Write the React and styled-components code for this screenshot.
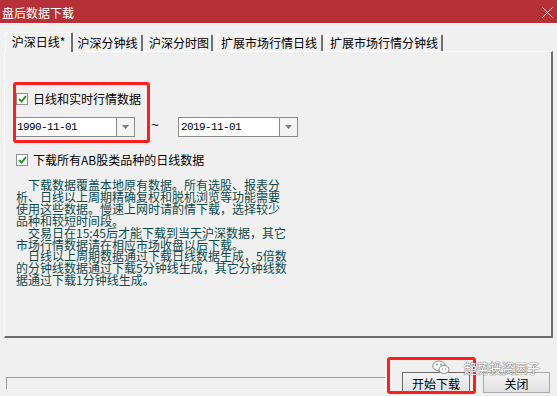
import React from 'react';
import styled, { createGlobalStyle } from 'styled-components';

const Global = createGlobalStyle`
  html, body { margin: 0; padding: 0; background: #f0f0f0; }
  body {
    width: 557px; height: 396px; overflow: hidden;
    font-family: "Noto Sans CJK SC", "Noto Sans", sans-serif;
  }
`;

const Window = styled.div`
  position: relative;
  width: 557px;
  height: 396px;
  display: flex;
  flex-direction: column;
  background: #f0f0f0;
  overflow: hidden;
`;

const TitleBar = styled.div`
  flex: 0 0 23px;
  box-sizing: border-box;
  background: #b53137;
  color: #fff;
  display: flex;
  align-items: center;
  justify-content: space-between;
  padding: 2px 4px 0 2px;
  font-size: 12px;
`;

const TitleText = styled.span`
  line-height: 12px;
`;

const Content = styled.div`
  padding: 9px 4px 0 4px;
  display: flex;
  flex-direction: column;
`;

const TabStrip = styled.div`
  display: flex;
  align-items: flex-end;
  gap: 3px;
  height: 19px;
  padding-left: 1px;
  position: relative;
  z-index: 1;
`;

const Tab = styled.div`
  box-sizing: border-box;
  width: ${p => p.$w}px;
  height: ${p => (p.$active ? 20 : 17)}px;
  margin-right: ${p => (p.$active ? -3 : 0)}px;
  margin-bottom: ${p => (p.$active ? -1 : 0)}px;
  background: #f0f0f0;
  border-top: 1px solid #fff;
  border-left: 1px solid #fff;
  border-right: 2px solid #707070;
  border-radius: 2px 2px 0 0;
  font-size: 12px;
  line-height: 12px;
  color: #000;
  display: flex;
  align-items: center;
  justify-content: center;
  padding-bottom: ${p => (p.$active ? 2 : 0)}px;
  white-space: nowrap;
`;

const Panel = styled.div`
  box-sizing: border-box;
  width: 549px;
  height: 287px;
  border-top: 1px solid #fff;
  border-left: 1px solid #fff;
  border-right: 2px solid #6d6d6d;
  border-bottom: 2px solid #6d6d6d;
  padding: 39px 0 0 9px;
  display: flex;
  flex-direction: column;
`;

const Row = styled.div`
  display: flex;
  align-items: center;
  height: ${p => p.$h || 16}px;
  margin-top: ${p => p.$mt || 0}px;
`;

const Box = styled.span`
  box-sizing: border-box;
  width: 12px;
  height: 12px;
  margin-left: 2px;
  border: 1px solid #8e8e8e;
  background: #fff;
  display: flex;
  align-items: center;
  justify-content: center;
`;

const Label = styled.span`
  margin-left: 5px;
  font-size: 12px;
  line-height: 12px;
  color: #000;
`;

const Combo = styled.div`
  box-sizing: border-box;
  width: ${p => p.$w}px;
  height: 20px;
  border: 1px solid #8c8c8c;
  background: #fff;
  display: flex;
  align-items: stretch;
`;

const ComboText = styled.span`
  flex: 1;
  padding-left: 2px;
  display: flex;
  align-items: center;
  font-family: "Liberation Mono", "DejaVu Sans Mono", monospace;
  font-size: 11px;
  letter-spacing: -0.6px;
  color: #000;
`;

const ComboButton = styled.span`
  width: 17px;
  border-left: 1px solid #8c8c8c;
  background: #f4f4f4;
  display: flex;
  align-items: center;
  justify-content: center;
`;

const Tilde = styled.span`
  width: 12px;
  margin: 0 17px 0 14px;
  font-family: "Liberation Sans", sans-serif;
  font-size: 13px;
  line-height: 12px;
  color: #000;
  text-align: center;
  position: relative;
  top: -2px;
`;

const Notes = styled.div`
  margin-top: 11px;
  padding-left: 2px;
  font-size: 12px;
  line-height: 11.9px;
  color: #0f4a4a;
  white-space: pre;
`;

const Footer = styled.div`
  flex: 1;
  display: flex;
  align-items: flex-end;
  padding: 0 7px 3px 6px;
`;

const Progress = styled.div`
  box-sizing: border-box;
  width: 380px;
  height: 13px;
  margin-bottom: 3px;
  border-top: 1px solid #a0a0a0;
  border-left: 1px solid #a0a0a0;
  border-bottom: 1px solid #fff;
  border-right: 1px solid #fff;
`;

const Button = styled.button`
  box-sizing: border-box;
  width: ${p => p.$w}px;
  height: 21px;
  margin: 0 0 0 ${p => p.$ml}px;
  padding: 2px 0 0;
  border: 1px solid ${p => (p.$default ? '#6b6b6b' : '#a9a9a9')};
  background: linear-gradient(#f3f3f3, #e2e2e2);
  font-family: "Noto Sans CJK SC", sans-serif;
  font-size: 12px;
  line-height: 12px;
  color: #000;
`;

const RedBox = styled.div`
  position: absolute;
  box-sizing: border-box;
  left: ${p => p.$x}px;
  top: ${p => p.$y}px;
  width: ${p => p.$w}px;
  height: ${p => p.$h}px;
  border: 3px solid #ff1e1e;
  border-radius: 3px;
  pointer-events: none;
`;

const Watermark = styled.div`
  position: absolute;
  left: 432px;
  top: 360px;
  display: flex;
  align-items: center;
  gap: 14px;
  pointer-events: none;
`;

const WatermarkText = styled.span`
  font-size: 13px;
  line-height: 14px;
  letter-spacing: -0.4px;
  color: #fff;
  text-shadow: 0 0 1px #666, 0 0 1px #666, 0 0 1px #777;
`;

const Check = () => (
  <svg width="9" height="8" viewBox="0 0 9 8">
    <path d="M1 4 L3.5 6.5 L8 1.2" fill="none" stroke="#1f9e1f" strokeWidth="2" />
  </svg>
);

const Arrow = () => (
  <svg width="7" height="4" viewBox="0 0 7 4">
    <path d="M0 0 H7 L3.5 4 Z" fill="#7d7d7d" />
  </svg>
);

const CloseIcon = () => (
  <svg width="11" height="11" viewBox="0 0 11 11">
    <path d="M0.5 0.5 L10.5 10.5 M10.5 0.5 L0.5 10.5" stroke="#fff" strokeWidth="1" />
  </svg>
);

const WeChat = () => (
  <svg width="18" height="15" viewBox="0 0 18 15">
    <ellipse cx="7" cy="6" rx="6.2" ry="5" fill="#fff" stroke="#888" strokeWidth="1" />
    <ellipse cx="12" cy="9.5" rx="5" ry="4" fill="#fff" stroke="#888" strokeWidth="1" />
    <circle cx="5" cy="4.5" r="0.9" fill="#888" />
    <circle cx="9" cy="4.5" r="0.9" fill="#888" />
    <circle cx="10.5" cy="9" r="0.7" fill="#888" />
    <circle cx="13.5" cy="9" r="0.7" fill="#888" />
  </svg>
);

const tabs = [
  { label: '沪深日线*', w: 68, active: true },
  { label: '沪深分钟线', w: 70 },
  { label: '沪深分时图', w: 67 },
  { label: '扩展市场行情日线', w: 107 },
  { label: '扩展市场行情分钟线', w: 117 },
];

const notes = [
  '　下载数据覆盖本地原有数据。所有选股、报表分',
  '析、日线以上周期精确复权和脱机浏览等功能需要',
  '使用这些数据。慢速上网时请酌情下载，选择较少',
  '品种和较短时间段。',
  '　交易日在15:45后才能下载到当天沪深数据，其它',
  '市场行情数据请在相应市场收盘以后下载。',
  '　日线以上周期数据通过下载日线数据生成，5倍数',
  '的分钟线数据通过下载5分钟线生成，其它分钟线数',
  '据通过下载1分钟线生成。',
].join('\n');

export default function App() {
  return (
    <Window>
      <Global />
      <TitleBar>
        <TitleText>盘后数据下载</TitleText>
        <CloseIcon />
      </TitleBar>
      <Content>
        <TabStrip>
          {tabs.map(t => (
            <Tab key={t.label} $w={t.w} $active={t.active}>{t.label}</Tab>
          ))}
        </TabStrip>
        <Panel>
          <Row>
            <Box><Check /></Box>
            <Label>日线和实时行情数据</Label>
          </Row>
          <Row $h={20} $mt={10}>
            <Combo $w={121}>
              <ComboText>1990-11-01</ComboText>
              <ComboButton><Arrow /></ComboButton>
            </Combo>
            <Tilde>~</Tilde>
            <Combo $w={120}>
              <ComboText>2019-11-01</ComboText>
              <ComboButton><Arrow /></ComboButton>
            </Combo>
          </Row>
          <Row $mt={15}>
            <Box><Check /></Box>
            <Label>下载所有AB股类品种的日线数据</Label>
          </Row>
          <Notes>{notes}</Notes>
        </Panel>
      </Content>
      <Footer>
        <Progress />
        <Button $w={68} $ml={16} $default>开始下载</Button>
        <Button $w={67} $ml={13}>关闭</Button>
      </Footer>
      <RedBox $x={13} $y={82} $w={137} $h={61} />
      <RedBox $x={387} $y={357} $w={89} $h={37} />
      <Watermark>
        <WeChat />
        <WatermarkText>趋势投资因子</WatermarkText>
      </Watermark>
    </Window>
  );
}
